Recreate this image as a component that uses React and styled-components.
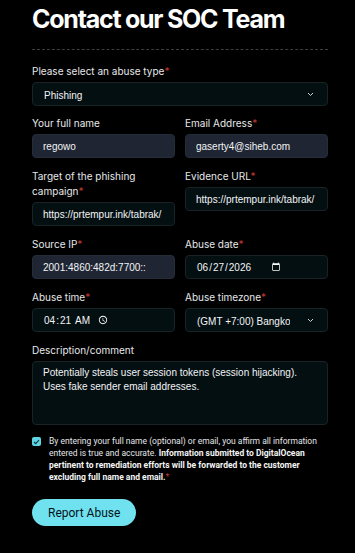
import React from 'react';
import styled, { createGlobalStyle } from 'styled-components';

const GlobalStyle = createGlobalStyle`
    html, body {
        margin: 0;
        padding: 0;
        background: #000;
    }
    body {
        font-family: Inter, 'Noto Sans', sans-serif;
        color: #e8eaec;
    }
`;

const Page = styled.div`
    width: 296px;
    padding: 0 27px 24px 32px;
    background: #000;
`;

const Title = styled.h1`
    margin: 0;
    padding-top: 3px;
    font-family: Inter, sans-serif;
    font-weight: 700;
    font-size: 25px;
    line-height: 32px;
    letter-spacing: -1.25px;
    color: #fff;
`;

const Divider = styled.hr`
    margin: 14px 0 0;
    border: none;
    border-top: 1px dashed #3a3f42;
`;

const Form = styled.form`
    display: flex;
    flex-direction: column;
    gap: 10px;
    margin-top: 14px;
`;

const Grid = styled.div`
    display: grid;
    grid-template-columns: 1fr 1fr;
    column-gap: 10px;
    row-gap: 11px;
    align-items: start;
`;

const Field = styled.label`
    display: flex;
    flex-direction: column;
    gap: 3px;
    margin-top: ${p => p.$offset || '0px'};
`;

const Label = styled.span`
    font-size: 10px;
    line-height: 15px;
    color: #e6e8ea;
`;

const Star = styled.span`
    color: #c23a32;
`;

const inputBase = `
    box-sizing: border-box;
    width: 100%;
    height: 24px;
    padding: 0 10px;
    border-radius: 4px;
    border: 1px solid #182326;
    font-family: 'Liberation Sans', Arial, sans-serif;
    font-size: 10px;
    color: #f2f4f5;
    outline: none;
    color-scheme: dark;
`;

const Input = styled.input`
    ${inputBase}
    background: ${p => (p.$filled ? '#1f2533' : '#040f12')};
    border-color: ${p => (p.$filled ? '#262d3a' : '#182326')};

    &::-webkit-datetime-edit {
        flex: 0 0 auto;
    }
    &::-webkit-calendar-picker-indicator {
        margin-left: ${p => p.$gap || '0px'};
        margin-right: auto;
        padding: 0;
        width: 10px;
        height: 10px;
    }
`;

const SelectBox = styled.div`
    position: relative;
    box-sizing: border-box;
    height: 24px;
    border-radius: 4px;
    border: 1px solid #182326;
    background: #040f12;
`;

const Select = styled.select`
    box-sizing: border-box;
    width: calc(100% - 37px);
    height: 22px;
    padding: 0 0 0 11px;
    border: none;
    background: transparent;
    appearance: none;
    font-family: 'Liberation Sans', Arial, sans-serif;
    font-size: 10px;
    color: #f2f4f5;
    outline: none;
    color-scheme: dark;
`;

const Chevron = styled.svg`
    position: absolute;
    right: 13px;
    top: 9px;
    pointer-events: none;
`;

const TextArea = styled.textarea`
    ${inputBase}
    height: 64px;
    padding: 4px 10px;
    line-height: 14px;
    resize: none;
    background: #040f12;
`;

const Consent = styled.div`
    display: flex;
    gap: 8px;
`;

const Check = styled.span`
    flex: none;
    width: 9px;
    height: 9px;
    margin-top: 2px;
    border-radius: 2px;
    background: #5fd4e3;
    display: flex;
    align-items: center;
    justify-content: center;
`;

const ConsentText = styled.p`
    margin: 0;
    font-family: Roboto, 'Liberation Sans', sans-serif;
    font-size: 8.5px;
    line-height: 12px;
    color: #e4e6e8;
    b {
        font-weight: 700;
        color: #f4f5f6;
    }
`;

const Button = styled.button`
    align-self: flex-start;
    margin-top: 6px;
    height: 27px;
    padding: 0 16px;
    border: none;
    border-radius: 14px;
    background: #6fe1ef;
    color: #06121a;
    font-family: Roboto, 'Liberation Sans', sans-serif;
    font-size: 12px;
    cursor: pointer;
`;

const Req = ({ children }) => (
    <Label>
        {children}
        <Star>*</Star>
    </Label>
);

const DropDown = ({ value, options }) => (
    <SelectBox>
        <Select defaultValue={value}>
            {options.map(([v, text]) => (
                <option key={v} value={v}>
                    {text}
                </option>
            ))}
        </Select>
        <Chevron width='7' height='5' viewBox='0 0 7 5'>
            <path d='M1 1l2.5 2.5L6 1' fill='none' stroke='#cfd4d6' strokeWidth='1' />
        </Chevron>
    </SelectBox>
);

const abuseTypes = [
    ['phishing', 'Phishing'],
    ['spam', 'Spam'],
    ['malware', 'Malware'],
];

const timezones = [['bkk', '(GMT +7:00) Bangkok, Hanoi, Jakarta']];

const App = () => (
    <>
        <GlobalStyle />
        <Page>
            <Title>Contact our SOC Team</Title>
            <Divider />
            <Form onSubmit={e => e.preventDefault()}>
                <Field>
                    <Req>Please select an abuse type</Req>
                    <DropDown value='phishing' options={abuseTypes} />
                </Field>
                <Grid>
                    <Field>
                        <Label>Your full name</Label>
                        <Input $filled defaultValue='regowo' />
                    </Field>
                    <Field>
                        <Req>Email Address</Req>
                        <Input $filled defaultValue='gaserty4@siheb.com' />
                    </Field>
                    <Field>
                        <Req>Target of the phishing campaign</Req>
                        <Input defaultValue='https://prtempur.ink/tabrak/' />
                    </Field>
                    <Field>
                        <Req>Evidence URL</Req>
                        <Input defaultValue='https://prtempur.ink/tabrak/' />
                    </Field>
                    <Field>
                        <Req>Source IP</Req>
                        <Input $filled defaultValue='2001:4860:482d:7700::' />
                    </Field>
                    <Field>
                        <Req>Abuse date</Req>
                        <Input type='date' $gap='2px' defaultValue='2026-06-27' />
                    </Field>
                    <Field>
                        <Req>Abuse time</Req>
                        <Input type='time' $gap='6px' defaultValue='04:21' />
                    </Field>
                    <Field>
                        <Req>Abuse timezone</Req>
                        <DropDown value='bkk' options={timezones} />
                    </Field>
                </Grid>
                <Field $offset='1px'>
                    <Label>Description/comment</Label>
                    <TextArea defaultValue={'Potentially steals user session tokens (session hijacking).\nUses fake sender email addresses.'} />
                </Field>
                <Consent>
                    <Check>
                        <svg width='7' height='6' viewBox='0 0 7 6'>
                            <path d='M1 3l1.7 1.7L6 1.2' fill='none' stroke='#0b3940' strokeWidth='1.2' />
                        </svg>
                    </Check>
                    <ConsentText>
                        By entering your full name (optional) or email, you affirm all information
                        entered is true and accurate. <b>Information submitted to DigitalOcean
                        pertinent to remediation efforts will be forwarded to the customer
                        excluding full name and email.</b>
                        <Star>*</Star>
                    </ConsentText>
                </Consent>
                <Button type='submit'>Report Abuse</Button>
            </Form>
        </Page>
    </>
);

export default App;
